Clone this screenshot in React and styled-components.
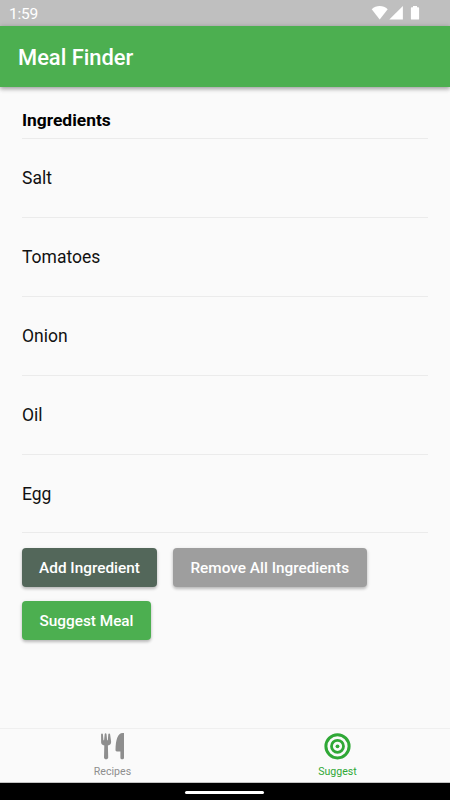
import React from 'react';
import styled, { createGlobalStyle } from 'styled-components';

const GlobalStyle = createGlobalStyle`
  * {
    box-sizing: border-box;
  }

  body {
    margin: 0;
    font-family: Roboto, "Liberation Sans", sans-serif;
    color: #111;
    background-color: #fafafa;
  }
`
const Screen = styled.div`
  display: flex;
  flex-direction: column;
  width: 450px;
  height: 800px;
  overflow: hidden;
  background-color: #fafafa;
`
const StatusBar = styled.header`
  display: flex;
  flex: none;
  justify-content: space-between;
  height: 26px;
  padding: 0 30px 0 9px;
  background-color: #bfbfbf;
  color: white;
`
const Clock = styled.span`
  font-size: 15.5px;
  letter-spacing: -0.2px;
  line-height: 28px;
`
const StatusIcons = styled.svg`
  width: 50px;
  height: 26px;
  fill: white;
`
const AppBar = styled.div`
  display: flex;
  flex: none;
  align-items: center;
  height: 61px;
  padding: 1px 18px 0;
  background-color: #4caf50;
  box-shadow: 0 2px 4px rgba(0, 0, 0, 0.28), 0 1px 6px rgba(0, 0, 0, 0.14);
`
const Title = styled.h1`
  margin: 0;
  color: white;
  font-size: 21.9px;
  font-weight: 500;
`
const Content = styled.main`
  flex: 1;
  padding: 17px 22px 0;
`
const ListTitle = styled.h2`
  height: 35.4px;
  margin: 0;
  border-bottom: 1px solid #ebebeb;
  color: black;
  font-size: 17.4px;
  font-weight: 700;
  line-height: 32px;
`
const List = styled.ul`
  margin: 0;
  padding: 0;
  list-style: none;
`
const Item = styled.li`
  height: 78.8px;
  border-bottom: 1px solid #ebebeb;
  font-size: 17.5px;
  line-height: 79px;
`
const Actions = styled.div`
  display: flex;
  flex-wrap: wrap;
  gap: 14px 16px;
  padding-top: 14.6px;
`
const Button = styled.button`
  width: ${ props => props.$width }px;
  height: 39px;
  padding: 1px 0 0;
  border: 0;
  border-radius: 4px;
  background-color: ${ props => props.$color };
  box-shadow: 0 2px 3px rgba(0, 0, 0, 0.2), 0 1px 4px rgba(0, 0, 0, 0.1);
  color: white;
  font-family: inherit;
  font-size: 15.35px;
  font-weight: 500;
  line-height: 38px;
`
const TabBar = styled.nav`
  display: flex;
  flex: none;
  height: 55px;
  border-top: 1px solid #efefef;
  border-bottom: 1px solid #c4c4c4;
`
const Tab = styled.a`
  display: flex;
  flex: 1;
  flex-direction: column;
  align-items: center;
  padding-top: 3px;
  color: ${ props => props.$active ? '#2fa836' : '#8e8e8e' };
  font-size: 10.6px;
  line-height: 15px;

  svg {
    width: 28px;
    height: 28px;
    margin-bottom: 4px;
  }
`
const SystemBar = styled.footer`
  display: flex;
  flex: none;
  justify-content: center;
  height: 17px;
  padding: 8px 1px 0 0;
  background-color: black;
`
const HomeHandle = styled.div`
  width: 79px;
  height: 3px;
  border-radius: 2px;
  background-color: white;
`

const ingredients = ['Salt', 'Tomatoes', 'Onion', 'Oil', 'Egg'];

function ForkKnifeIcon() {
  return (
    <svg viewBox='0.2 0 28 28' fill='currentColor'>
      <path d='M2.3 2.2c0-1.100 1.800-1.100 1.800 0l.5 6.100h.7l.6-6.400c.1-1 1.700-1 1.800 0l.6 6.400H9l.5-6.100c0-1.100 1.800-1.100 1.800 0l1 7.300c.3 2.200-1.100 3.600-3.200 4.100l.3 11.900c0 2.400-4.200 2.400-4.200 0l.3-11.900c-2.100-.5-3.500-1.900-3.200-4.100z' />
      <path d='M25.200 1.300v24.500c0 2-3.600 2-3.600 0v-6.300h-3.500c-.9 0-1.400-.6-1.400-1.400C16.900 8 18.800 1.300 23.900 1.100c.8 0 1.300-.2 1.300.2z' />
    </svg>
  )
}

function TargetIcon() {
  return (
    <svg viewBox='0.5 0 28 28' fill='none' stroke='currentColor'>
      <circle cx='14' cy='14.3' r='11.600' strokeWidth='3' />
      <circle cx='14' cy='14.3' r='6' strokeWidth='2.8' />
      <circle cx='14' cy='14.3' r='1.900' fill='currentColor' stroke='none' />
    </svg>
  )
}

export default function App() {
  return (
    <Screen>
      <GlobalStyle />
      <StatusBar>
        <Clock>1:59</Clock>
        <StatusIcons viewBox='370 0 50 26'>
          <path d='M379.700 19.5 371.700 9.200c4.400-4.300 11.600-4.300 16 0z' />
          <path d='M402.900 6v13.600h-13.600z' />
          <path d='M413 6h4v1.200h1.200c.6 0 .9.3.9.9v10.600c0 .6-.3.9-.9.9h-6.400c-.6 0-.9-.3-.9-.9V8.100c0-.6.3-.9.9-.9h1.200z' />
        </StatusIcons>
      </StatusBar>
      <AppBar>
        <Title>Meal Finder</Title>
      </AppBar>
      <Content>
        <ListTitle>Ingredients</ListTitle>
        <List>
          { ingredients.map(name => <Item key={ name }>{ name }</Item>) }
        </List>
        <Actions>
          <Button $width={ 135 } $color='#53675a'>Add Ingredient</Button>
          <Button $width={ 193.5 } $color='#9e9e9e'>Remove All Ingredients</Button>
          <Button $width={ 129 } $color='#4caf50'>Suggest Meal</Button>
        </Actions>
      </Content>
      <TabBar>
        <Tab>
          <ForkKnifeIcon />
          Recipes
        </Tab>
        <Tab $active>
          <TargetIcon />
          Suggest
        </Tab>
      </TabBar>
      <SystemBar>
        <HomeHandle />
      </SystemBar>
    </Screen>
  )
}
